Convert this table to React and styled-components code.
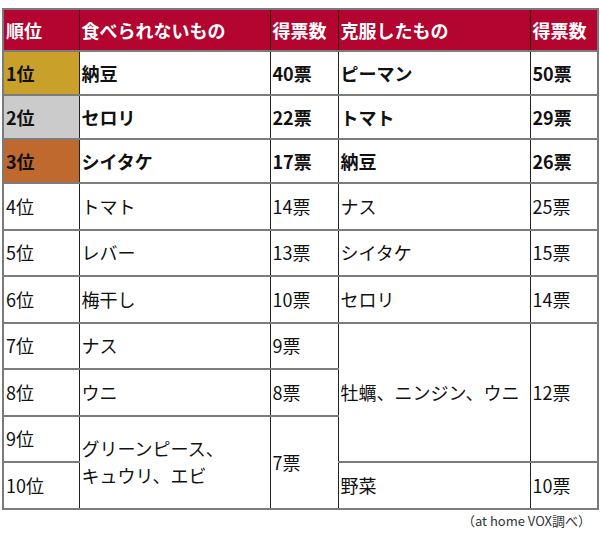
import React from "react";
import styled, { createGlobalStyle } from "styled-components";

const Global = createGlobalStyle`
  html, body { margin: 0; padding: 0; background: #fff; }
  body { font-family: "Noto Sans CJK JP", "Noto Sans", sans-serif; color: #111; }
`;

const Page = styled.div`
  padding: 8px 3px 0 2px;
  width: 595px;
`;

const Table = styled.table`
  width: 595px;
  table-layout: fixed;
  border-collapse: collapse;
  border: 2px solid #7a7a7a;
`;

const Th = styled.th`
  background: #b3052f;
  color: #fff;
  font-weight: 700;
  font-size: 18px;
  line-height: 26px;
  text-align: left;
  padding: 0 2px;
  height: 40px;
  border: 1px solid #3a0010;
  white-space: nowrap;
`;

const rankBg = { 1: "#c9a12a", 2: "#cbcbcb", 3: "#c0692f" };

const Td = styled.td`
  font-size: 18px;
  line-height: 27px;
  text-align: left;
  vertical-align: middle;
  padding: 0 2px;
  border-top: 2px solid #7c7c7c;
  border-bottom: 2px solid #7c7c7c;
  border-left: 1px solid #222;
  border-right: 1px solid #222;
  font-weight: ${(p) => (p.$bold ? 700 : 400)};
  background: ${(p) => (p.$rank ? rankBg[p.$rank] : "#fff")};
  white-space: nowrap;
`;

const Tr = styled.tr`
  height: ${(p) => (p.$top ? "44px" : "46.5px")};
`;

const Note = styled.div`
  font-size: 13px;
  line-height: 22px;
  text-align: right;
  padding-right: 6px;
  color: #333;
`;

export default function App() {
  return (
    <>
      <Global />
      <Page>
        <Table>
          <colgroup>
            <col style={{ width: 76 }} />
            <col style={{ width: 191 }} />
            <col style={{ width: 68 }} />
            <col style={{ width: 192 }} />
            <col style={{ width: 68 }} />
          </colgroup>
          <thead>
            <tr>
              <Th>順位</Th>
              <Th>食べられないもの</Th>
              <Th>得票数</Th>
              <Th>克服したもの</Th>
              <Th>得票数</Th>
            </tr>
          </thead>
          <tbody>
            <Tr $top>
              <Td $bold $rank={1}>1位</Td>
              <Td $bold>納豆</Td>
              <Td $bold>40票</Td>
              <Td $bold>ピーマン</Td>
              <Td $bold>50票</Td>
            </Tr>
            <Tr $top>
              <Td $bold $rank={2}>2位</Td>
              <Td $bold>セロリ</Td>
              <Td $bold>22票</Td>
              <Td $bold>トマト</Td>
              <Td $bold>29票</Td>
            </Tr>
            <Tr $top>
              <Td $bold $rank={3}>3位</Td>
              <Td $bold>シイタケ</Td>
              <Td $bold>17票</Td>
              <Td $bold>納豆</Td>
              <Td $bold>26票</Td>
            </Tr>
            <Tr>
              <Td>4位</Td>
              <Td>トマト</Td>
              <Td>14票</Td>
              <Td>ナス</Td>
              <Td>25票</Td>
            </Tr>
            <Tr>
              <Td>5位</Td>
              <Td>レバー</Td>
              <Td>13票</Td>
              <Td>シイタケ</Td>
              <Td>15票</Td>
            </Tr>
            <Tr>
              <Td>6位</Td>
              <Td>梅干し</Td>
              <Td>10票</Td>
              <Td>セロリ</Td>
              <Td>14票</Td>
            </Tr>
            <Tr>
              <Td>7位</Td>
              <Td>ナス</Td>
              <Td>9票</Td>
              <Td rowSpan={3}>牡蠣、ニンジン、ウニ</Td>
              <Td rowSpan={3}>12票</Td>
            </Tr>
            <Tr>
              <Td>8位</Td>
              <Td>ウニ</Td>
              <Td>8票</Td>
            </Tr>
            <Tr>
              <Td>9位</Td>
              <Td rowSpan={2}>
                グリーンピース、
                <br />
                キュウリ、エビ
              </Td>
              <Td rowSpan={2}>7票</Td>
            </Tr>
            <Tr>
              <Td>10位</Td>
              <Td>野菜</Td>
              <Td>10票</Td>
            </Tr>
          </tbody>
        </Table>
        <Note>（at home VOX調べ）</Note>
      </Page>
    </>
  );
}
